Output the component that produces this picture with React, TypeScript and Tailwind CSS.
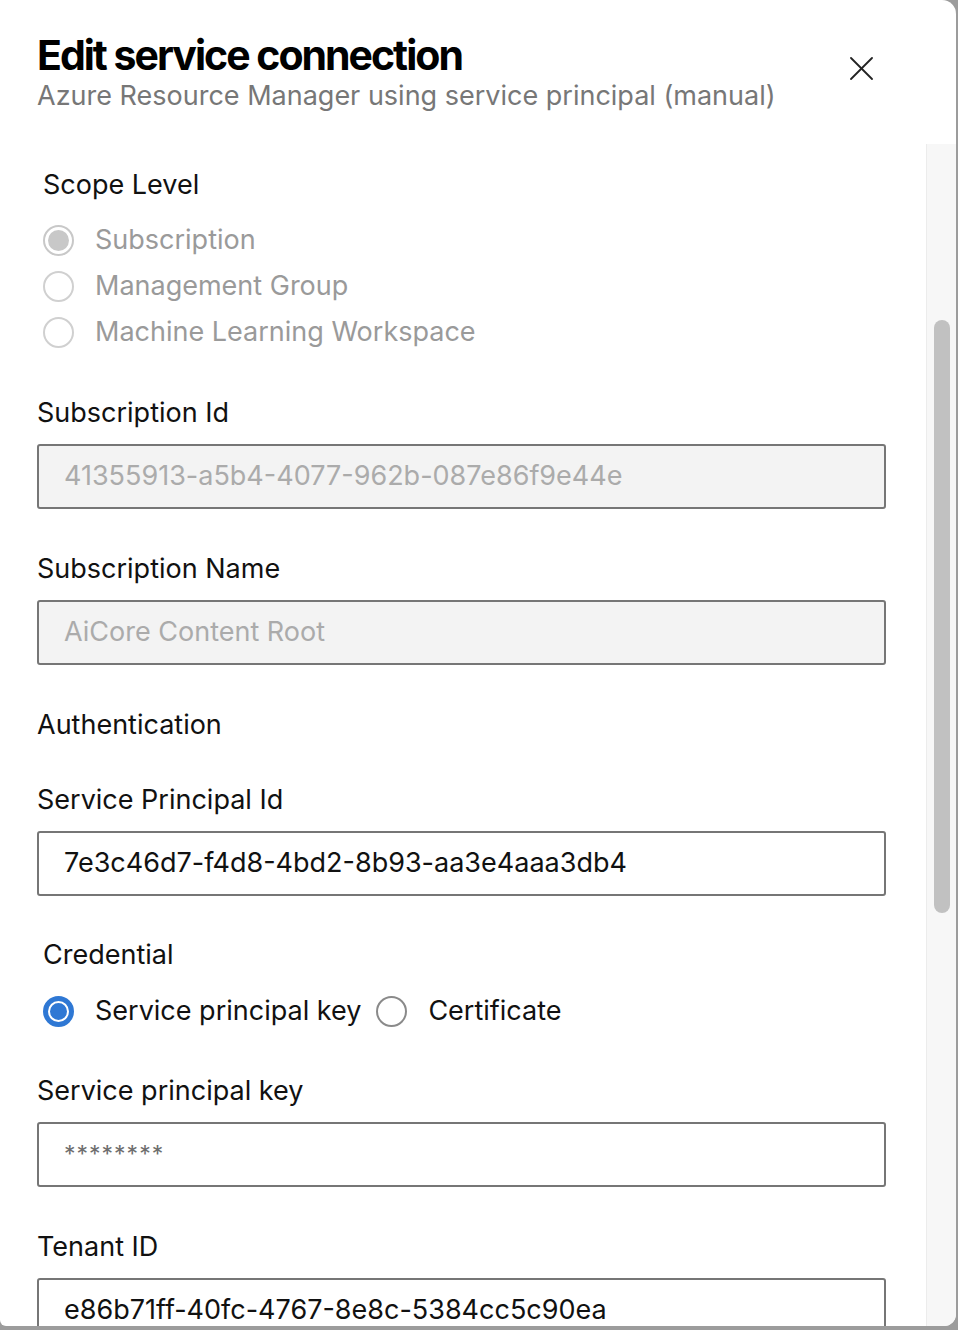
type RadioProps = {
  label: string;
  checked?: boolean;
  disabled?: boolean;
};

function Radio({ label, checked, disabled }: RadioProps) {
  let circle = 'border-[#8a8a8a]';
  if (disabled) circle = checked ? 'border-[#c8c8c8]' : 'border-[#d0d0d0]';
  else if (checked) circle = 'border-[#2f78d4]';

  return (
    <div className="flex items-center h-[46px]">
      <span
        className={`flex items-center justify-center w-[31px] h-[31px] rounded-full border-2 ${circle} ${
          checked && !disabled ? 'bg-[#2f78d4]' : 'bg-white'
        }`}
      >
        {checked && (
          <span
            className={`w-[21px] h-[21px] rounded-full ${
              disabled ? 'bg-[#c8c8c8] border-0' : 'bg-[#2f78d4] border-2 border-white'
            }`}
          />
        )}
      </span>
      <span className={`ml-[21px] ${disabled ? 'text-[#9a9a9a]' : 'text-[#111]'}`}>{label}</span>
    </div>
  );
}

function Field({
  label,
  value,
  disabled,
  masked,
  top = 'mt-[44px]',
}: {
  label: string;
  value: string;
  disabled?: boolean;
  masked?: boolean;
  top?: string;
}) {
  return (
    <div className={top}>
      <div className="h-[32px] leading-[32px] text-[#111]">{label}</div>
      <div
        className={`mt-[15px] h-[65px] w-[849px] rounded-[3px] border-2 border-[#767676] flex items-center px-[25px] ${
          disabled ? 'bg-[#f3f3f3] text-[#ababab]' : 'bg-white text-[#111]'
        }`}
      >
        {masked ? (
          <span className="text-[23px] tracking-[1px] text-[#6e6e6e]">{value}</span>
        ) : (
          <span>{value}</span>
        )}
      </div>
    </div>
  );
}

export default function App() {
  return (
    <div
      className="w-[958px] h-[1330px] bg-[#9c9c9c] overflow-hidden"
      style={{ fontFamily: 'Inter, "Noto Sans", sans-serif' }}
    >
      <div className="w-[956px] h-[1326px] bg-white rounded-tr-[14px] rounded-br-[12px] rounded-bl-[6px] flex flex-col overflow-hidden text-[27px]">
        {/* Header */}
        <div className="h-[144px] shrink-0 flex items-start justify-between pl-[37px] pr-[83px]">
          <div className="pt-[30px]">
            <h1 className="text-[41px] font-bold tracking-[-2px] leading-[50px] text-black">
              Edit service connection
            </h1>
            <div className="text-[#777] leading-[34px] -mt-[1px]">
              Azure Resource Manager using service principal (manual)
            </div>
          </div>
          <button className="mt-[57px] text-[#222]">
            <svg width="23" height="23" viewBox="0 0 23 23" fill="none" stroke="currentColor" strokeWidth="1.8" strokeLinecap="round">
              <line x1="1" y1="1" x2="22" y2="22" />
              <line x1="22" y1="1" x2="1" y2="22" />
            </svg>
          </button>
        </div>

        {/* Body */}
        <div className="flex flex-1 min-h-0">
          <div className="flex-1 pl-[37px] overflow-hidden">
            <div className="pl-[6px] pt-[24px]">
              <div className="h-[34px] leading-[34px] text-[#111]">Scope Level</div>
              <div className="mt-[15px]">
                <Radio label="Subscription" checked disabled />
                <Radio label="Management Group" disabled />
                <Radio label="Machine Learning Workspace" disabled />
              </div>
            </div>

            <div className="-mt-[2px]">
              <Field label="Subscription Id" value="41355913-a5b4-4077-962b-087e86f9e44e" disabled />
              <Field label="Subscription Name" value="AiCore Content Root" disabled />
            </div>

            <div className="mt-[44px] h-[32px] leading-[32px] text-[#111]">Authentication</div>

            <Field
              label="Service Principal Id"
              value="7e3c46d7-f4d8-4bd2-8b93-aa3e4aaa3db4"
              top="mt-[43px]"
            />

            <div className="pl-[6px] mt-[43px]">
              <div className="h-[32px] leading-[32px] text-[#111]">Credential</div>
              <div className="mt-[17px] flex items-center gap-[15px]">
                <Radio label="Service principal key" checked />
                <Radio label="Certificate" />
              </div>
            </div>

            <div className="-mt-[3px]">
              <Field label="Service principal key" value="********" masked />
              <Field label="Tenant ID" value="e86b71ff-40fc-4767-8e8c-5384cc5c90ea" />
            </div>
          </div>

          {/* Scrollbar */}
          <div className="w-[30px] shrink-0 bg-[#f7f7f7] border-l border-[#ececec] flex justify-center">
            <div className="mt-[176px] w-[16px] h-[593px] rounded-full bg-[#c1c1c1]" />
          </div>
        </div>
      </div>
    </div>
  );
}
